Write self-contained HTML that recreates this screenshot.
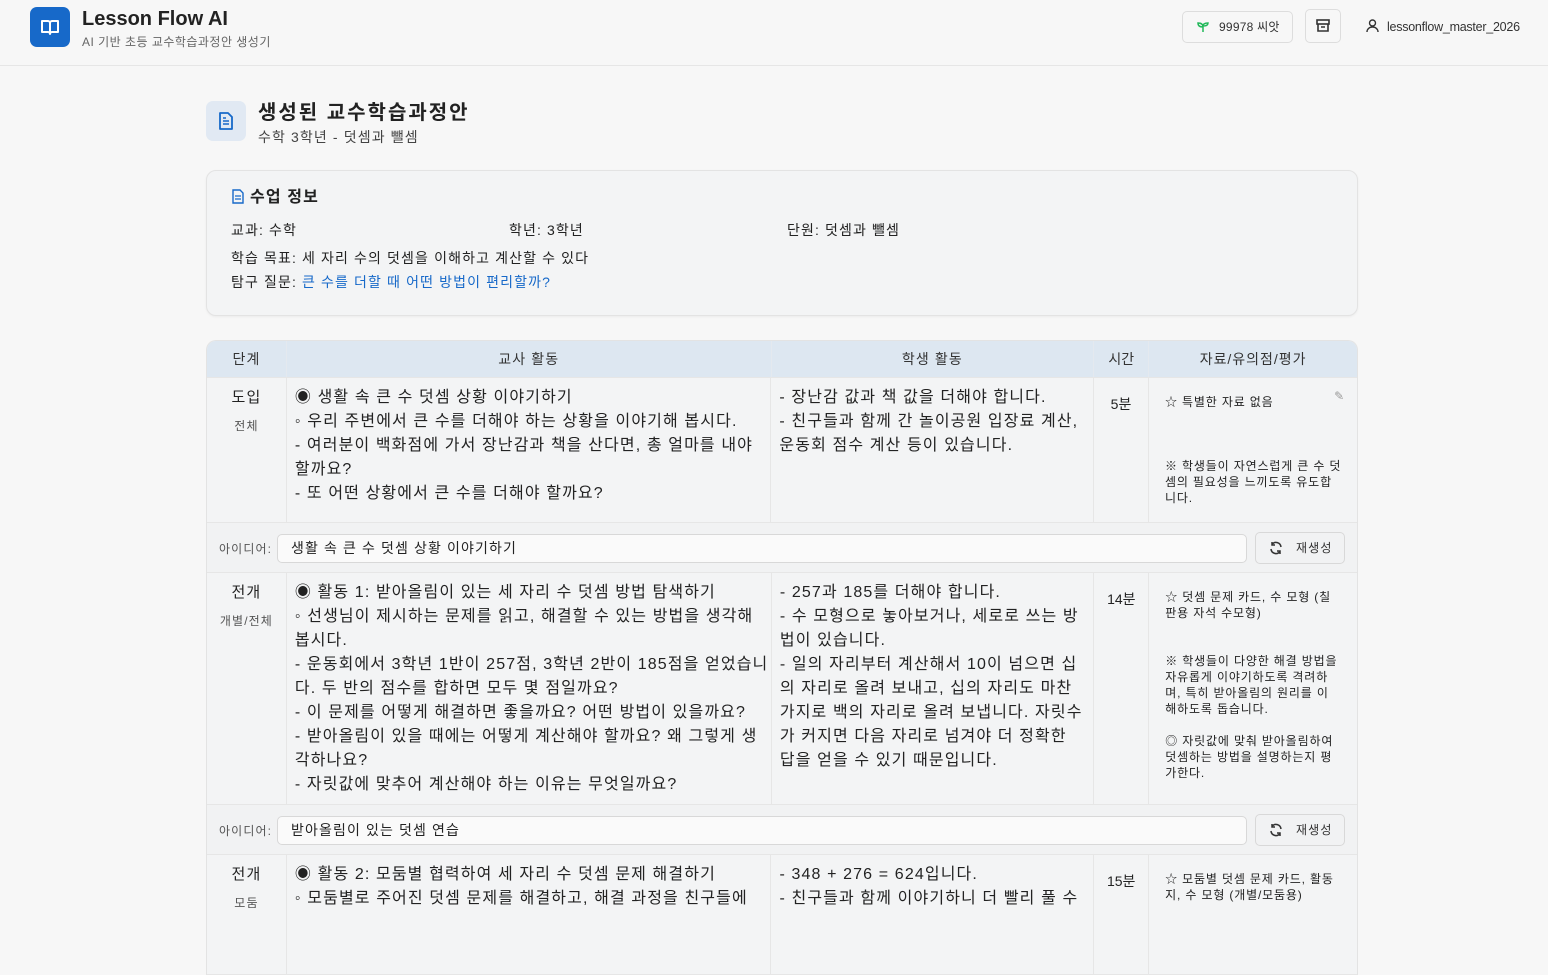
<!DOCTYPE html>
<html><head><meta charset="utf-8"><style>
*{box-sizing:border-box;margin:0;padding:0}
body{width:1548px;height:896px;overflow:hidden;background:#f7f7f7;font-family:"Liberation Sans","Noto Sans CJK KR",sans-serif;color:#222;letter-spacing:0.07em}
.hdr{height:66px;border-bottom:1px solid #e6e6e6;position:relative;background:#f7f7f7}
.logo{position:absolute;left:30px;top:7px;width:40px;height:40px;background:#1769c9;border-radius:7px}
.t1{position:absolute;left:82px;top:8px;font-size:20px;font-weight:bold;color:#222;letter-spacing:0}
.t2{position:absolute;left:82px;top:33px;font-size:12px;color:#666;letter-spacing:0.04em}
.seed{position:absolute;left:1182px;top:11px;width:111px;height:32px;border:1px solid #ddd;border-radius:5px;font-size:12px;color:#333;line-height:30px;padding-left:36px;letter-spacing:0.02em}
.arch{position:absolute;left:1305px;top:9px;width:36px;height:34px;border:1px solid #ddd;border-radius:5px}
.user{position:absolute;left:1366px;top:19px;font-size:12.5px;color:#333;letter-spacing:-0.02em}
.ttl{position:absolute;left:206px;top:101px;width:40px;height:40px;background:#e1e9f3;border-radius:7px}
.h1{position:absolute;left:258px;top:96px;font-size:20px;font-weight:bold;letter-spacing:0.1em}
.h2{position:absolute;left:258px;top:127px;font-size:14px;color:#444}
.card{position:absolute;left:206px;top:170px;width:1152px;height:146px;background:#f3f4f5;border:1px solid #e3e3e3;border-radius:10px;box-shadow:0 1px 2px rgba(0,0,0,.05);font-size:14px}
.card div{position:absolute}
.tbl{position:absolute;left:206px;top:340px;width:1152px;border-radius:10px 10px 0 0;overflow:hidden;border:1px solid #e3e3e3;border-bottom:none}
.row{display:flex;background:#f3f4f5;border-bottom:1px solid #e6e6e6}
.row>div{border-right:1px solid #e6e6e6}
.row>div:last-child{border-right:none}
.c1{width:80px;text-align:center}.c2{width:485px}.c3{width:323px}.c4{width:55px;text-align:center}.c5{width:208px;position:relative}
.head{height:37px;background:#dde7f1;font-size:14px;color:#333;line-height:37px}
.head>div{text-align:center;border-right:1px solid #e4e9ef}
.main{font-size:16px;line-height:24px}
.c2,.c3{padding:8px 8px;white-space:nowrap}
.c1 .s{font-size:15px;padding-top:8px;line-height:24px}
.c1 .sub{font-size:12px;color:#555;margin:4px 3px 0;padding-top:4px;line-height:16px}
.c4{font-size:14px;padding-top:14px;letter-spacing:0}
.c5{font-size:12px;line-height:16px;padding:16px 16px 0;white-space:nowrap;letter-spacing:0.07em}
.idea{height:50px;background:#f1f2f3;border-bottom:1px solid #e6e6e6;position:relative;font-size:12px;color:#555}
.idea .inp{position:absolute;left:70px;top:11px;width:970px;height:29px;background:#fafafa;border:1px solid #d8d8d8;border-radius:5px;font-size:14px;color:#222;padding-left:13px;line-height:27px}
.idea .btn{position:absolute;left:1048px;top:9px;width:90px;height:32px;border:1px solid #d8d8d8;border-radius:5px;background:#f1f2f3;line-height:30px;padding-left:40px;color:#333}
.btn svg{position:absolute;left:13px;top:8px}
</style></head><body>
<div class="hdr">
<div class="logo"><svg width="40" height="40" viewBox="0 0 40 40"><path d="M12 14h6a2 2 0 0 1 2 2v11a2 2 0 0 0-2-2h-6zM28 14h-6a2 2 0 0 0-2 2v11a2 2 0 0 1 2-2h6z" fill="none" stroke="#fff" stroke-width="2" stroke-linejoin="round"/></svg></div>
<div class="t1">Lesson Flow AI</div>
<div class="t2">AI 기반 초등 교수학습과정안 생성기</div>
<div class="seed"><svg style="position:absolute;left:14px;top:9px" width="12" height="12" viewBox="0 0 12 12"><path d="M6 11V6M6 6C6 3 4 2 1 2c0 3 2 4 5 4M6 5c0-2 2-3 5-3 0 2-2 3-5 3" fill="none" stroke="#22b85a" stroke-width="1.5"/></svg>99978 씨앗</div>
<div class="arch"><svg width="34" height="32" viewBox="0 0 34 32"><rect x="11" y="10" width="12" height="4" fill="none" stroke="#333" stroke-width="1.6"/><path d="M12 14v7h10v-7M15 17h4" fill="none" stroke="#333" stroke-width="1.6"/></svg></div>
<div class="user"><svg style="vertical-align:-2px;margin-right:8px" width="13" height="14" viewBox="0 0 13 14"><circle cx="6.5" cy="4" r="3" fill="none" stroke="#333" stroke-width="1.4"/><path d="M1 13c0-3 2.5-5 5.5-5s5.5 2 5.5 5" fill="none" stroke="#333" stroke-width="1.4"/></svg>lessonflow_master_2026</div>
</div>
<div class="ttl"><svg width="40" height="40" viewBox="0 0 40 40"><path d="M14 12h8l4 4v12h-12z" fill="none" stroke="#1769c9" stroke-width="1.8" stroke-linejoin="round"/><path d="M17 20h6M17 23h6M17 17h3" stroke="#1769c9" stroke-width="1.6"/></svg></div>
<div class="h1">생성된 교수학습과정안</div>
<div class="h2">수학 3학년 - 덧셈과 뺄셈</div>
<div class="card">
<div style="left:25px;top:12px;font-size:16px;font-weight:bold"><svg style="vertical-align:-2px;margin-right:6px" width="12" height="15" viewBox="0 0 12 15"><path d="M1 1h7l3 3v10H1z" fill="none" stroke="#1769c9" stroke-width="1.4"/><path d="M3 7h6M3 10h6" stroke="#1769c9" stroke-width="1.2"/></svg>수업 정보</div>
<div style="left:24px;top:49px">교과: 수학</div>
<div style="left:302px;top:49px">학년: 3학년</div>
<div style="left:580px;top:49px">단원: 덧셈과 뺄셈</div>
<div style="left:24px;top:77px">학습 목표: 세 자리 수의 덧셈을 이해하고 계산할 수 있다</div>
<div style="left:24px;top:101px">탐구 질문: <span style="color:#1769c9">큰 수를 더할 때 어떤 방법이 편리할까?</span></div>
</div>
<div class="tbl">
<div class="row head"><div class="c1">단계</div><div class="c2" style="padding:0">교사 활동</div><div class="c3" style="padding:0">학생 활동</div><div class="c4" style="padding:0">시간</div><div class="c5" style="padding:0;font-size:14px;line-height:37px">자료/유의점/평가</div></div>
<div class="row main" style="height:145px"><div class="c1"><div class="s">도입</div><div class="sub">전체</div></div>
<div class="c2">◉ 생활 속 큰 수 덧셈 상황 이야기하기<br>◦ 우리 주변에서 큰 수를 더해야 하는 상황을 이야기해 봅시다.<br>- 여러분이 백화점에 가서 장난감과 책을 산다면, 총 얼마를 내야<br>할까요?<br>- 또 어떤 상황에서 큰 수를 더해야 할까요?</div>
<div class="c3">- 장난감 값과 책 값을 더해야 합니다.<br>- 친구들과 함께 간 놀이공원 입장료 계산,<br>운동회 점수 계산 등이 있습니다.</div>
<div class="c4">5분</div>
<div class="c5">☆ 특별한 자료 없음<span style="position:absolute;right:12px;top:10px;color:#999">✎</span><br><br><br><br>※ 학생들이 자연스럽게 큰 수 덧<br>셈의 필요성을 느끼도록 유도합<br>니다.</div></div>
<div class="idea"><span style="position:absolute;left:12px;top:17px">아이디어:</span><div class="inp">생활 속 큰 수 덧셈 상황 이야기하기</div><div class="btn"><svg width="14" height="14" viewBox="0 0 14 14"><path d="M12 6A5 5 0 0 0 3 3.5M2 8a5 5 0 0 0 9 2.5M3 1v3h3M11 13v-3H8" fill="none" stroke="#333" stroke-width="1.5"/></svg>재생성</div></div>
<div class="row main" style="height:232px"><div class="c1"><div class="s">전개</div><div class="sub">개별/전체</div></div>
<div class="c2">◉ 활동 1: 받아올림이 있는 세 자리 수 덧셈 방법 탐색하기<br>◦ 선생님이 제시하는 문제를 읽고, 해결할 수 있는 방법을 생각해<br>봅시다.<br>- 운동회에서 3학년 1반이 257점, 3학년 2반이 185점을 얻었습니<br>다. 두 반의 점수를 합하면 모두 몇 점일까요?<br>- 이 문제를 어떻게 해결하면 좋을까요? 어떤 방법이 있을까요?<br>- 받아올림이 있을 때에는 어떻게 계산해야 할까요? 왜 그렇게 생<br>각하나요?<br>- 자릿값에 맞추어 계산해야 하는 이유는 무엇일까요?</div>
<div class="c3">- 257과 185를 더해야 합니다.<br>- 수 모형으로 놓아보거나, 세로로 쓰는 방<br>법이 있습니다.<br>- 일의 자리부터 계산해서 10이 넘으면 십<br>의 자리로 올려 보내고, 십의 자리도 마찬<br>가지로 백의 자리로 올려 보냅니다. 자릿수<br>가 커지면 다음 자리로 넘겨야 더 정확한<br>답을 얻을 수 있기 때문입니다.</div>
<div class="c4">14분</div>
<div class="c5">☆ 덧셈 문제 카드, 수 모형 (칠<br>판용 자석 수모형)<br><br><br>※ 학생들이 다양한 해결 방법을<br>자유롭게 이야기하도록 격려하<br>며, 특히 받아올림의 원리를 이<br>해하도록 돕습니다.<br><br>◎ 자릿값에 맞춰 받아올림하여<br>덧셈하는 방법을 설명하는지 평<br>가한다.</div></div>
<div class="idea"><span style="position:absolute;left:12px;top:17px">아이디어:</span><div class="inp">받아올림이 있는 덧셈 연습</div><div class="btn"><svg width="14" height="14" viewBox="0 0 14 14"><path d="M12 6A5 5 0 0 0 3 3.5M2 8a5 5 0 0 0 9 2.5M3 1v3h3M11 13v-3H8" fill="none" stroke="#333" stroke-width="1.5"/></svg>재생성</div></div>
<div class="row main" style="height:120px"><div class="c1"><div class="s">전개</div><div class="sub">모둠</div></div>
<div class="c2">◉ 활동 2: 모둠별 협력하여 세 자리 수 덧셈 문제 해결하기<br>◦ 모둠별로 주어진 덧셈 문제를 해결하고, 해결 과정을 친구들에</div>
<div class="c3">- 348 + 276 = 624입니다.<br>- 친구들과 함께 이야기하니 더 빨리 풀 수</div>
<div class="c4">15분</div>
<div class="c5">☆ 모둠별 덧셈 문제 카드, 활동<br>지, 수 모형 (개별/모둠용)</div></div>
</div>
</body></html>
